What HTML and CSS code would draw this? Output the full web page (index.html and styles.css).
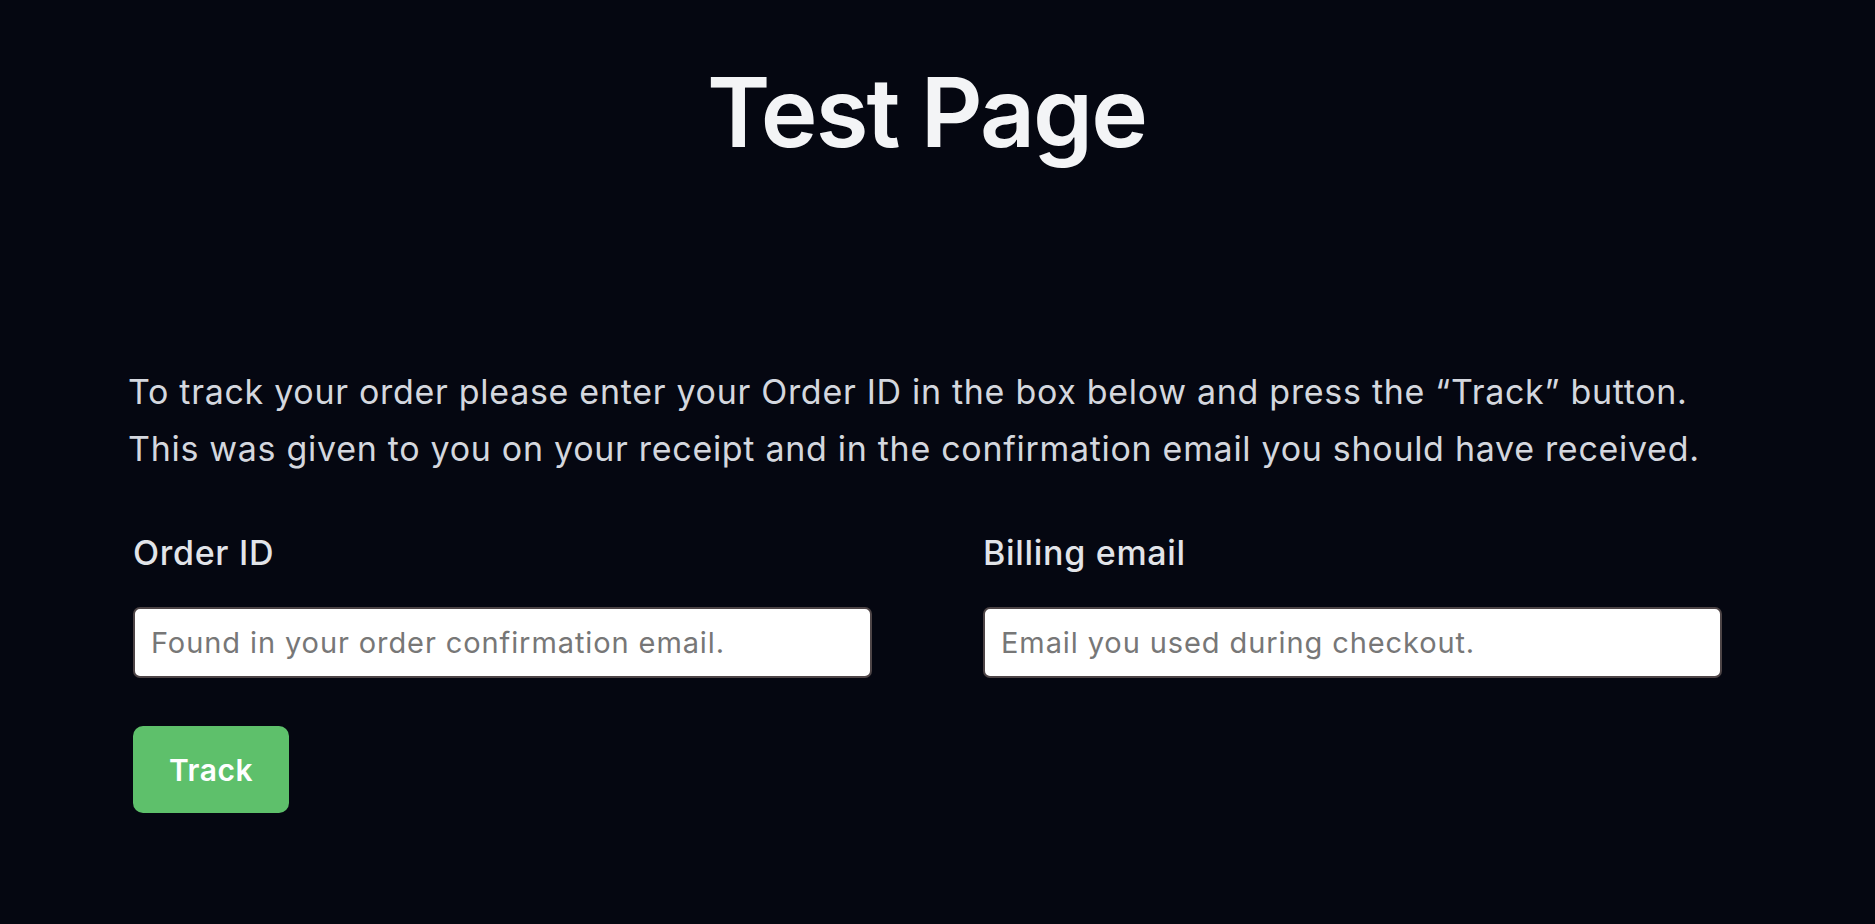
FILE: index.html
```html
<!DOCTYPE html>
<html lang="en">
<head>
<meta charset="utf-8">
<title>Test Page</title>
<link rel="stylesheet" href="styles.css">
</head>
<body>
<main class="page">
  <h1 class="title">Test Page</h1>
  <section class="content">
    <p class="intro">To track your order please enter your Order ID in the box below and press the “Track” button.<br>This was given to you on your receipt and in the confirmation email you should have received.</p>
    <form class="track-form">
      <div class="fields">
        <div class="field">
          <label class="label" for="order-id">Order ID</label>
          <input class="input" id="order-id" type="text" placeholder="Found in your order confirmation email.">
        </div>
        <div class="field">
          <label class="label" for="billing-email">Billing email</label>
          <input class="input" id="billing-email" type="email" placeholder="Email you used during checkout.">
        </div>
      </div>
      <button class="button" type="button">Track</button>
    </form>
  </section>
</main>
</body>
</html>
```
FILE: styles.css
```css
html, body {
  margin: 0;
  padding: 0;
  background: #050711;
}

body {
  font-family: Inter, "Noto Sans", sans-serif;
  color: #d6d9df;
}

.page {
  padding-top: 64px;
}

.title {
  margin: 0;
  padding-right: 22px;
  text-align: center;
  font-size: 96px;
  line-height: 96px;
  font-weight: 600;
  letter-spacing: -0.02em;
  color: #f3f4f6;
}

.content {
  padding: 203px 128px 0 128px;
}

.intro {
  margin: 0;
  font-size: 34px;
  line-height: 57px;
  font-weight: 400;
  letter-spacing: 0.7px;
  color: #d4d7de;
  white-space: nowrap;
}

.track-form {
  margin: 52px 0 0 5px;
}

.fields {
  display: grid;
  grid-template-columns: 739px 739px;
  column-gap: 111px;
}

.field {
  display: flex;
  flex-direction: column;
  gap: 30px;
}

.label {
  font-size: 34px;
  line-height: 48px;
  font-weight: 500;
  letter-spacing: 0.7px;
  color: #e2e4e9;
}

.input {
  box-sizing: border-box;
  height: 71px;
  margin: 0;
  padding: 0 16px;
  border: 2px solid #4d4446;
  border-radius: 7px;
  background: #ffffff;
  font-family: Inter, "Noto Sans", sans-serif;
  font-size: 29px;
  letter-spacing: 0.9px;
  color: #222;
}

.input::placeholder {
  color: #777777;
}

.button {
  margin-top: 48px;
  width: 156px;
  height: 87px;
  border: 0;
  border-radius: 10px;
  background: #5ec06b;
  color: #ffffff;
  font-family: Inter, "Noto Sans", sans-serif;
  font-size: 30px;
  font-weight: 600;
  letter-spacing: 0.5px;
  cursor: pointer;
}
```
